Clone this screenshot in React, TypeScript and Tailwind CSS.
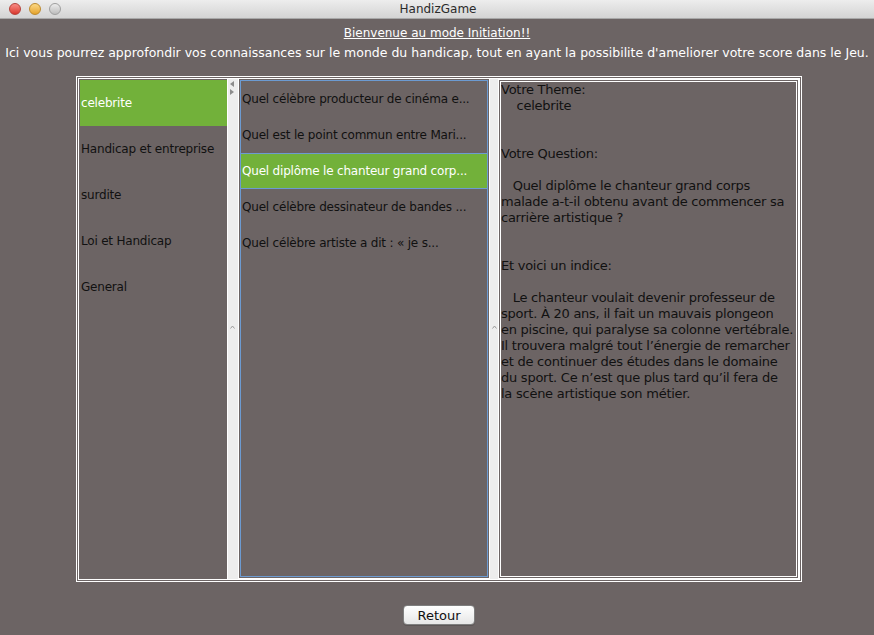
import React from 'react';

const themes = ["celebrite", "Handicap et entreprise", "surdite", "Loi et Handicap", "General"];

const questions = [
  "Quel célèbre producteur de cinéma e...",
  "Quel est le point commun entre Mari...",
  "Quel diplôme le chanteur grand corp...",
  "Quel célèbre dessinateur de bandes ...",
  "Quel célèbre artiste a dit : « je s...",
];

const details = [
  "Votre Theme:",
  "    celebrite",
  "",
  "",
  "Votre Question:",
  "",
  "   Quel diplôme le chanteur grand corps",
  "malade a-t-il obtenu avant de commencer sa",
  "carrière artistique ?",
  "",
  "",
  "Et voici un indice:",
  "",
  "   Le chanteur voulait devenir professeur de",
  "sport. À 20 ans, il fait un mauvais plongeon",
  "en piscine, qui paralyse sa colonne vertébrale.",
  "Il trouvera malgré tout l’énergie de remarcher",
  "et de continuer des études dans le domaine",
  "du sport. Ce n’est que plus tard qu’il fera de",
  "la scène artistique son métier.",
];

const Grip = () => (
  <svg width="5" height="4" viewBox="0 0 5 4" className="absolute top-[246px] left-[2px]">
    <path d="M0.5 3.5 L2.5 1 L4.5 3.5" fill="none" stroke="#9a9a9a" strokeWidth="1" />
  </svg>
);

const App = () => {
  const selectedTheme = 0;
  const selectedQuestion = 2;

  return (
    <div className="w-[874px] h-[635px] bg-[#6c6464] flex flex-col overflow-hidden font-['DejaVu_Sans',sans-serif]">
      {/* Title bar */}
      <div className="relative h-[19px] bg-gradient-to-b from-[#ededed] to-[#d4d4d4] border-b border-[#a8a8a8] flex items-center justify-center">
        <div className="absolute left-[9px] top-[3px] flex gap-[8px]">
          <div className="w-[12px] h-[12px] rounded-full bg-gradient-to-b from-[#f88a84] to-[#d9342c] border border-[#b5423a]"></div>
          <div className="w-[12px] h-[12px] rounded-full bg-gradient-to-b from-[#fbd882] to-[#e5a428] border border-[#bd8a2e]"></div>
          <div className="w-[12px] h-[12px] rounded-full bg-gradient-to-b from-[#ececec] to-[#bdbdbd] border border-[#9f9f9f]"></div>
        </div>
        <span className="text-[12px] text-[#2b2b2b] leading-none ml-[2px]">HandizGame</span>
      </div>

      {/* Header */}
      <div className="mt-[6px] text-center text-white text-[12px] leading-[16px]">
        <span className="underline">Bienvenue au mode Initiation!!</span>
      </div>
      <div className="mt-[4px] text-center text-white text-[12.5px] leading-[16px] whitespace-nowrap">
        Ici vous pourrez approfondir vos connaissances sur le monde du handicap, tout en ayant la possibilite d'ameliorer votre score dans le Jeu.
      </div>

      {/* Split pane */}
      <div className="ml-[76px] mt-[15px] w-[726px] h-[506px] border border-white p-[1px]">
        <div className="w-full h-full border border-white flex">
          {/* Themes */}
          <div className="w-[149px] h-full pl-[1px] pt-[1px] border-r border-white">
            {themes.map((t, i) => (
              <div
                key={i}
                className={`h-[46px] flex items-center pl-[1px] text-[12px] tracking-[-0.2px] ${i === selectedTheme ? 'bg-[#72b13a] text-white' : 'text-[#111]'}`}
              >
                {t}
              </div>
            ))}
          </div>

          {/* Divider 1 */}
          <div className="relative w-[10px] h-full bg-[#ededed]">
            <svg width="6" height="16" viewBox="0 0 6 16" className="absolute top-[1px] left-[1px]">
              <path d="M5 1 L1 4 L5 7 Z" fill="#8c8c8c" />
              <path d="M1 9 L5 12 L1 15 Z" fill="#8c8c8c" />
            </svg>
            <Grip />
          </div>

          {/* Questions */}
          <div className="w-[252px] h-full border-x border-b border-white px-[1px] pb-[1px] pt-[1px]">
            <div className="h-full border border-[#6c9bd2]">
              {questions.map((q, i) => (
                <div
                  key={i}
                  className={`h-[36px] flex items-center pl-[1px] text-[12px] tracking-[-0.2px] whitespace-nowrap ${i === selectedQuestion ? 'bg-[#72b13a] text-white border-y border-[#6c9bd2]' : 'text-[#111]'}`}
                >
                  {q}
                </div>
              ))}
            </div>
          </div>

          {/* Divider 2 */}
          <div className="relative w-[8px] h-full bg-[#ededed]">
            <Grip />
          </div>

          {/* Details */}
          <div className="flex-1 h-full border border-white p-[1px]">
            <div className="h-full border border-white overflow-hidden">
              {details.map((line, i) => (
                <div key={i} className="h-[16px] leading-[16px] text-[13px] text-[#111] whitespace-pre tracking-[-0.25px]">
                  {line}
                </div>
              ))}
            </div>
          </div>
        </div>
      </div>

      {/* Footer */}
      <div className="flex justify-center mt-[23px] pl-[4px]">
        <button className="w-[72px] h-[20px] rounded-[4px] border border-[#7f7f7f] bg-gradient-to-b from-white to-[#e6e6e6] text-[13px] leading-none text-[#111] shadow-[0_1px_0_rgba(0,0,0,0.15)]">
          Retour
        </button>
      </div>
    </div>
  );
};

export default App;
